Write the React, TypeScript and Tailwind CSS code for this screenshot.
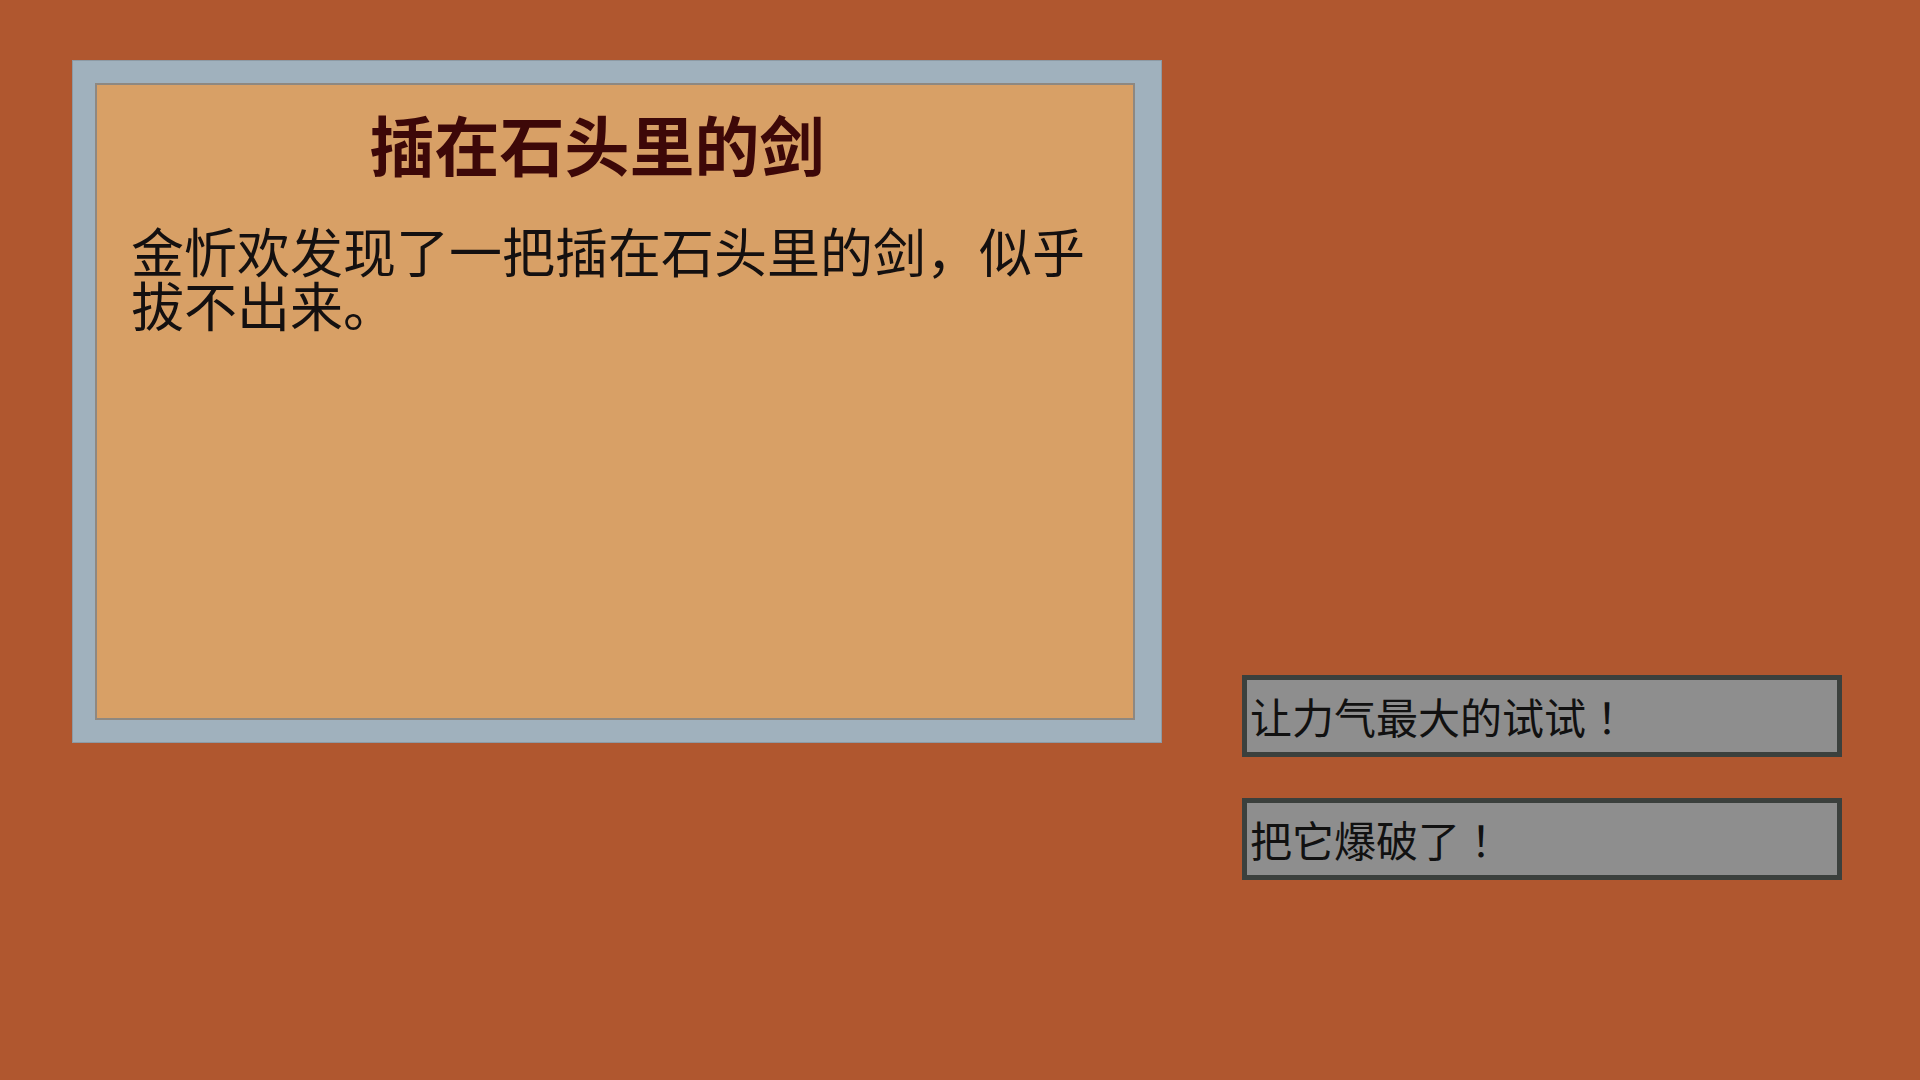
const choices = ['让力气最大的试试', '把它爆破了']

export default function App() {
  return (
    <div
      className="min-h-screen w-full bg-[#b0572f] flex items-start pl-[72px] pt-[60px] [text-spacing-trim:space-all]"
      style={{ fontFamily: '"Noto Sans CJK SC", "Noto Sans", sans-serif' }}
    >
      {/* event card */}
      <div className="w-[1090px] h-[683px] shrink-0 flex border border-[#8d9aa4] bg-[#a0b1bd] pl-[22px] pt-[22px] pr-[26px] pb-[22px]">
        <div className="flex-1 flex flex-col border-2 border-[#8e8881] bg-[#d8a066]">
          <h1 className="pt-[26px] pr-[36px] text-center text-[65px] leading-[65px] font-bold text-[#3d0808]">
            插在石头里的剑
          </h1>
          <p className="mt-[47px] pl-[34px] w-[1000px] text-[53px] leading-[54px] text-[#141010]">
            金忻欢发现了一把插在石头里的剑，似乎拔不出来。
          </p>
        </div>
      </div>

      {/* options */}
      <div className="ml-[80px] mt-[615px] flex flex-col gap-[41px]">
        {choices.map((c) => (
          <button
            key={c}
            className="w-[600px] h-[82px] flex items-center border-[5px] border-[#3b403d] bg-[#8e8e8e] pl-[3px] text-left text-[42px] leading-none text-[#111]"
          >
            {c}
            <span style={{ fontFamily: '"Noto Sans CJK TC", sans-serif' }}>！</span>
          </button>
        ))}
      </div>
    </div>
  )
}
